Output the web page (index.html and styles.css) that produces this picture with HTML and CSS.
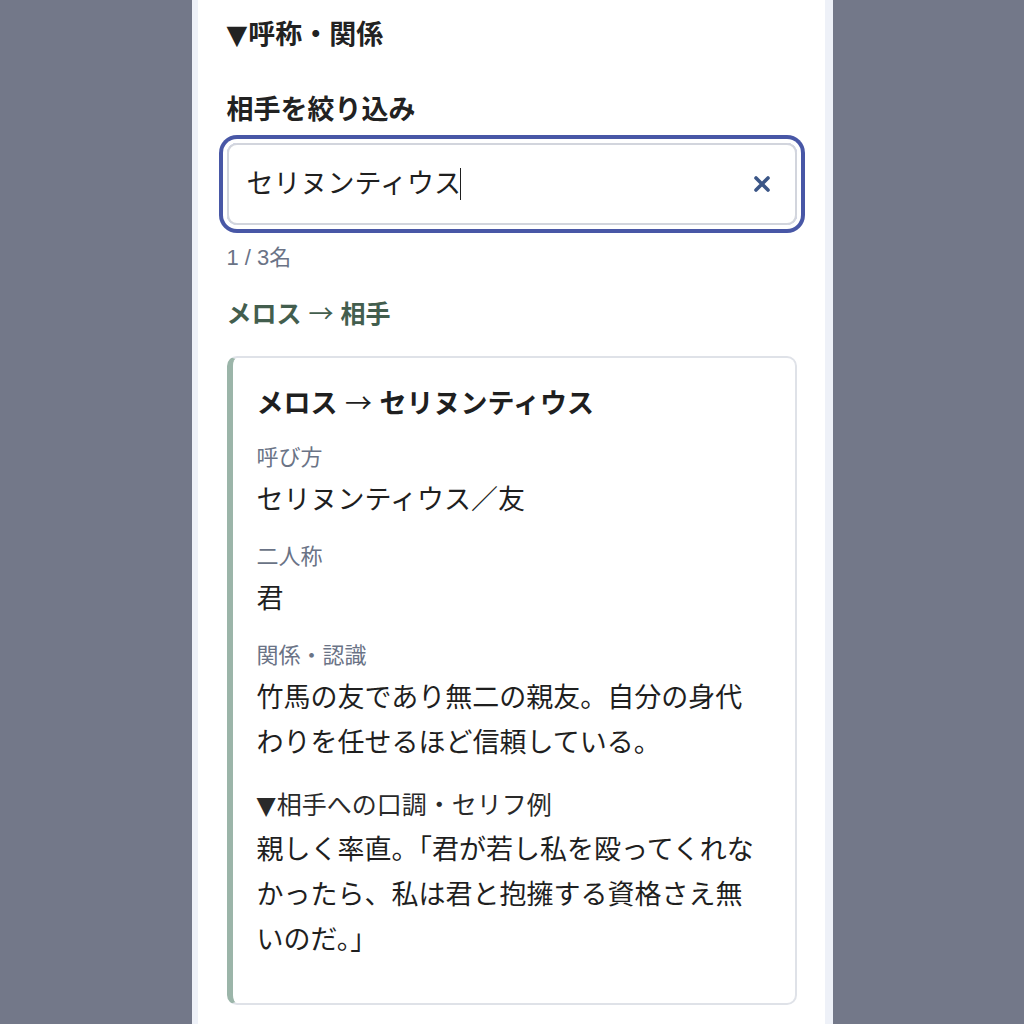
FILE: index.html
```html
<!DOCTYPE html>
<html lang="ja">
<head>
<meta charset="utf-8">
<title>呼称・関係</title>
<link rel="stylesheet" href="styles.css">
</head>
<body>
<div class="panel">
  <div class="sheet">
    <div class="section-title"><span class="tri">▼</span>呼称・関係</div>
    <div class="filter-label">相手を絞り込み</div>
    <div class="search">
      <span class="search-text">セリヌンティウス</span><span class="caret"></span>
      <svg class="clear" width="18" height="18" viewBox="0 0 18 18" aria-hidden="true">
        <path d="M3 3 L15 15 M15 3 L3 15" stroke="#3b5687" stroke-width="3.6" stroke-linecap="round" fill="none"/>
      </svg>
    </div>
    <div class="count">1 / 3名</div>
    <div class="group-title">メロス <span class="arr">→</span> 相手</div>
    <div class="card">
      <div class="card-title">メロス <span class="arr">→</span> セリヌンティウス</div>
      <div class="field">
        <div class="field-label">呼び方</div>
        <div class="field-value">セリヌンティウス／友</div>
      </div>
      <div class="field">
        <div class="field-label">二人称</div>
        <div class="field-value">君</div>
      </div>
      <div class="field">
        <div class="field-label">関係・認識</div>
        <div class="field-value">竹馬の友であり無二の親友。自分の身代わりを任せるほど信頼している。</div>
      </div>
      <div class="sub-title"><span class="tri">▼</span>相手への口調・セリフ例</div>
      <div class="field-value">親しく率直。「君が若し私を殴ってくれなかったら、私は君と抱擁する資格さえ無いのだ。」</div>
    </div>
  </div>
</div>
</body>
</html>
```

FILE: styles.css
```css
html, body {
  margin: 0;
  padding: 0;
}

body {
  background: #737889;
  font-family: "Liberation Sans", "Noto Sans CJK JP", sans-serif;
  color: #1f1f1f;
}

.panel {
  width: 641px;
  margin: 0 auto;
  min-height: 1024px;
  box-sizing: border-box;
  background: #eef1f8;
  padding: 0 8px 0 6px;
}

.sheet {
  background: #ffffff;
  min-height: 1024px;
  box-sizing: border-box;
  padding: 15px 28px 40px 29px;
}

.section-title {
  font-size: 27px;
  line-height: 40px;
  font-weight: 700;
  color: #222;
}

.tri {
  font-family: "DejaVu Sans", sans-serif;
  font-weight: 400;
  font-size: 1em;
  margin-right: 1px;
}

.arr {
  font-family: "Noto Sans CJK JP", sans-serif;
  font-weight: 400;
}

.filter-label {
  margin-top: 35px;
  font-size: 27px;
  line-height: 40px;
  font-weight: 700;
  color: #222;
}

.search {
  margin-top: 13px;
  height: 82px;
  box-sizing: border-box;
  border: 2px solid #d2d5dd;
  border-radius: 10px;
  box-shadow: 0 0 0 4px #ffffff, 0 0 0 8px #4857a6;
  display: flex;
  align-items: center;
  padding: 0 24px 0 18px;
}

.search-text {
  font-size: 27px;
  line-height: 40px;
  color: #1f1f1f;
}

.caret {
  width: 0;
  height: 32px;
  border-left: 1.5px solid #1f1f1f;
  margin-left: -1px;
}

.clear {
  margin-left: auto;
  display: block;
}

.count {
  margin-top: 18px;
  font-size: 22px;
  line-height: 30px;
  color: #6a7386;
}

.group-title {
  margin-top: 22px;
  font-size: 25px;
  line-height: 34px;
  font-weight: 700;
  color: #435e4e;
}

.card {
  margin-top: 25px;
  border: 2px solid #dfe2e8;
  border-left: 6px solid #9bb5a9;
  border-radius: 10px;
  padding: 24px 28px 40px 24px;
}

.card-title {
  font-size: 27px;
  line-height: 40px;
  font-weight: 700;
  color: #1f1f1f;
}

.field {
  margin-top: 18px;
}

.field-label {
  font-size: 22px;
  line-height: 32px;
  color: #6a7386;
}

.field-value {
  margin-top: 4px;
  font-size: 27px;
  line-height: 45px;
  color: #1f1f1f;
}

.sub-title {
  margin-top: 21px;
  font-size: 25px;
  line-height: 36px;
  color: #2a2a2a;
}
```
